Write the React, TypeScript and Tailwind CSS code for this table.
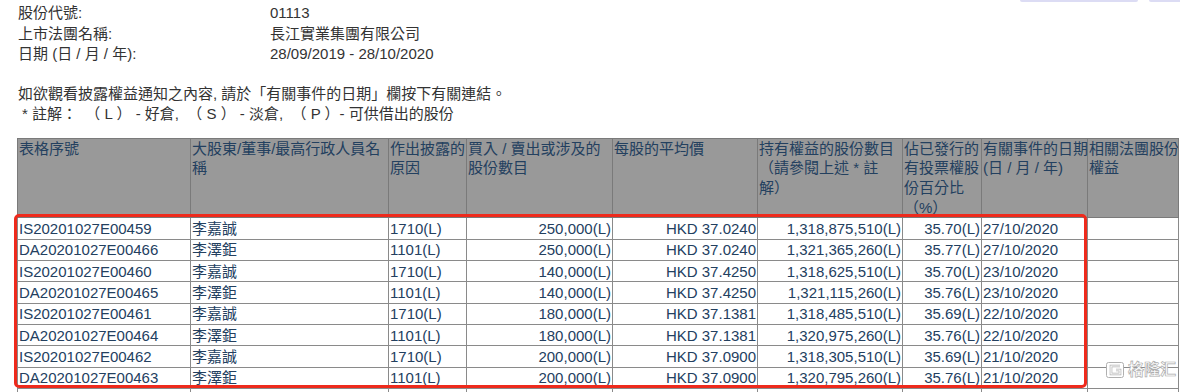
import React from 'react';

const rows = [
  ['IS20201027E00459', '李嘉誠', '1710(L)', '250,000(L)', 'HKD 37.0240', '1,318,875,510(L)', '35.70(L)', '27/10/2020'],
  ['DA20201027E00466', '李澤鉅', '1101(L)', '250,000(L)', 'HKD 37.0240', '1,321,365,260(L)', '35.77(L)', '27/10/2020'],
  ['IS20201027E00460', '李嘉誠', '1710(L)', '140,000(L)', 'HKD 37.4250', '1,318,625,510(L)', '35.70(L)', '23/10/2020'],
  ['DA20201027E00465', '李澤鉅', '1101(L)', '140,000(L)', 'HKD 37.4250', '1,321,115,260(L)', '35.76(L)', '23/10/2020'],
  ['IS20201027E00461', '李嘉誠', '1710(L)', '180,000(L)', 'HKD 37.1381', '1,318,485,510(L)', '35.69(L)', '22/10/2020'],
  ['DA20201027E00464', '李澤鉅', '1101(L)', '180,000(L)', 'HKD 37.1381', '1,320,975,260(L)', '35.76(L)', '22/10/2020'],
  ['IS20201027E00462', '李嘉誠', '1710(L)', '200,000(L)', 'HKD 37.0900', '1,318,305,510(L)', '35.69(L)', '21/10/2020'],
  ['DA20201027E00463', '李澤鉅', '1101(L)', '200,000(L)', 'HKD 37.0900', '1,320,795,260(L)', '35.76(L)', '21/10/2020'],
  ['IS20201027E00458', '李嘉誠', '1710(L)', '250,000(L)', 'HKD 37.1990', '1,318,125,510(L)', '35.68(L)', '20/10/2020'],
];

// right aligned columns: shares, price, holding, percent
const rightCols = [3, 4, 5, 6];

const App: React.FC = () => {
  return (
    <div className="relative w-[1180px] h-[392px] overflow-hidden bg-white font-['Liberation_Sans','Noto_Sans_CJK_TC',sans-serif] text-[15px] text-[#333]">
      {/* faint bars at the very top */}
      <div className="absolute top-0 left-[1020px] w-[118px] h-[2px] bg-[#dcdcf4] rounded-b" />
      <div className="absolute top-0 left-[1149px] w-[31px] h-[2px] bg-[#dcdcf4] rounded-bl" />

      <div className="pl-[18px] pt-[3px]">
        <div className="grid grid-cols-[252px_1fr] leading-[20.5px]">
          <div>股份代號:</div>
          <div>01113</div>
          <div>上市法團名稱:</div>
          <div>長江實業集團有限公司</div>
          <div>日期 (日 / 月 / 年):</div>
          <div>28/09/2019 - 28/10/2020</div>
        </div>

        <div className="mt-[19px] leading-[20px]">
          <div>如欲觀看披露權益通知之內容, 請於「有關事件的日期」欄按下有關連結。</div>
          <div className="pl-[4px] whitespace-pre">* 註解：  （ L ） - 好倉,  （ S ） - 淡倉,  （ P ）- 可供借出的股份</div>
        </div>
      </div>

      <table className="mt-[14px] ml-[17px] w-[1161px] table-fixed border-collapse text-[#23405f]">
        <colgroup>
          <col className="w-[173px]" />
          <col className="w-[198px]" />
          <col className="w-[78px]" />
          <col className="w-[146px]" />
          <col className="w-[145px]" />
          <col className="w-[145px]" />
          <col className="w-[79px]" />
          <col className="w-[106px]" />
          <col className="w-[91px]" />
        </colgroup>
        <thead>
          <tr className="bg-[#999999] leading-[19.7px] align-top text-left">
            <th className="border border-[#7a7a7a] px-px font-normal h-[79px]">表格序號</th>
            <th className="border border-[#7a7a7a] px-px font-normal">大股東/董事/最高行政人員名<br />稱</th>
            <th className="border border-[#7a7a7a] px-px font-normal">作出披露的<br />原因</th>
            <th className="border border-[#7a7a7a] px-px font-normal whitespace-nowrap">買入 / 賣出或涉及的<br />股份數目</th>
            <th className="border border-[#7a7a7a] px-px font-normal">每股的平均價</th>
            <th className="border border-[#7a7a7a] px-px font-normal whitespace-nowrap">持有權益的股份數目<br />（請參閱上述 * 註<br />解）</th>
            <th className="border border-[#7a7a7a] px-px font-normal whitespace-nowrap">佔已發行的<br />有投票權股<br />份百分比<br />（%）</th>
            <th className="border border-[#7a7a7a] px-px font-normal whitespace-nowrap">有關事件的日期<br />(日 / 月 / 年)</th>
            <th className="border border-[#7a7a7a] px-px font-normal whitespace-nowrap overflow-hidden">相關法團股份<br />權益</th>
          </tr>
        </thead>
        <tbody>
          {rows.map((r, i) => (
            <tr key={i} className="h-[21.33px] leading-[19px]">
              {r.map((c, j) => (
                <td
                  key={j}
                  className={`border border-[#8a8a8a] px-px py-0 whitespace-nowrap overflow-hidden ${
                    rightCols.includes(j) ? 'text-right' : 'text-left'
                  }`}
                >
                  {c}
                </td>
              ))}
              <td className="border border-[#8a8a8a] px-px py-0" />
            </tr>
          ))}
        </tbody>
      </table>

      {/* red highlight box */}
      <div className="absolute left-[14px] top-[214px] w-[1073px] h-[174px] border-[3px] border-[#ee2a1c] rounded-[5px]" />

      {/* watermark */}
      <div className="absolute left-[1105px] top-[361px] flex items-center gap-[3px]">
        <svg width="20" height="18" viewBox="0 0 20 18">
          <rect x="1.5" y="1.5" width="17" height="15" rx="2" fill="#ffffff" stroke="#b0b0b0" strokeWidth="1" />
          <path d="M15 5H6v8h9V9h-4" fill="none" stroke="#b0b0b0" strokeWidth="2.6" />
          <path d="M15 5H6v8h9V9h-4" fill="none" stroke="#ffffff" strokeWidth="1.2" />
        </svg>
        <span className="text-[16px] leading-[18px] font-bold text-white [-webkit-text-stroke:0.7px_#adadad]">
          格隆汇
        </span>
      </div>
    </div>
  );
};

export default App;
